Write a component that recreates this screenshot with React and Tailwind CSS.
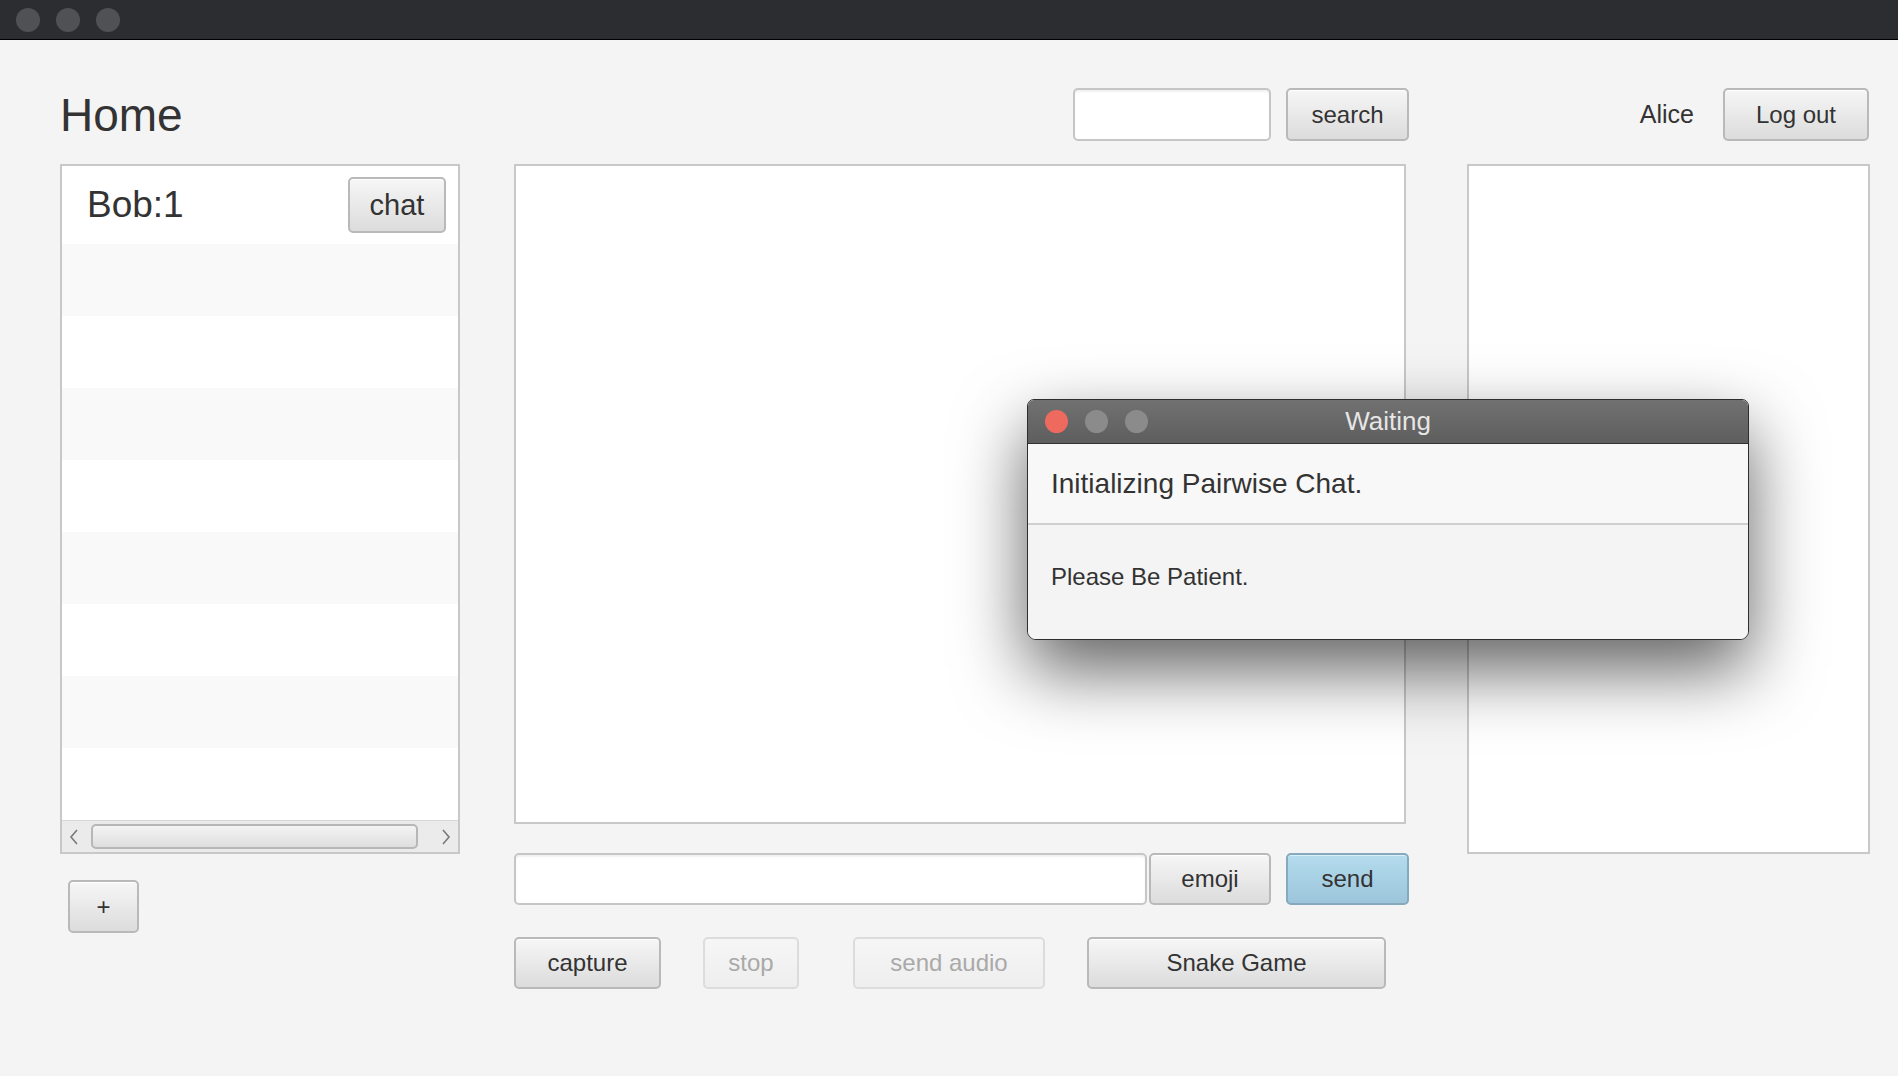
import React, { useState } from 'react';

const font = { fontFamily: '"Liberation Sans", Arial, sans-serif' };

// JavaFX-ish (Modena) control styles
const btn =
  'flex items-center justify-center rounded-[5px] border-2 border-[#b9b9b9] bg-linear-to-b from-[#f6f6f6] to-[#dcdcdc] shadow-[inset_0_1px_0_#ffffff] text-[#333] text-[24px] leading-none';
const btnDisabled =
  'flex items-center justify-center rounded-[5px] border-2 border-[#dcdcdc] bg-linear-to-b from-[#f6f6f6] to-[#eeeeee] text-[#a9a9a9] text-[24px] leading-none';
const btnBlue =
  'flex items-center justify-center rounded-[5px] border-2 border-[#86a9bd] bg-linear-to-b from-[#b4dced] to-[#9cc5dc] shadow-[inset_0_1px_0_#d8f0fa] text-[#333] text-[24px] leading-none';
const field =
  'rounded-[5px] border-2 border-[#c6c6c6] bg-white shadow-[inset_0_2px_2px_rgba(0,0,0,0.06)] outline-none px-2 text-[22px]';

function TrafficLights({ colors, size, gap }) {
  return (
    <div className={`flex items-center ${gap}`}>
      {colors.map((c, i) => (
        <span key={i} className={`${size} rounded-full ${c}`} />
      ))}
    </div>
  );
}

function FriendList() {
  const rows = Array.from({ length: 8 });
  return (
    <div className="mt-[23px] flex h-[690px] w-[400px] flex-col border-2 border-[#c8c8c8] bg-white">
      <div className="flex h-[78px] shrink-0 items-center justify-between bg-white pl-[25px] pr-[12px]">
        <span className="text-[37px] text-[#333]">Bob:1</span>
        <button className={`${btn} h-[56px] w-[98px] text-[29px]`}>chat</button>
      </div>
      {rows.map((_, i) => (
        <div key={i} className={`h-[72px] shrink-0 ${i % 2 === 0 ? 'bg-[#f9f9f9]' : 'bg-white'}`} />
      ))}
      {/* horizontal scrollbar */}
      <div className="flex h-[32px] shrink-0 items-center border-t border-[#d6d6d6] bg-[#ebebeb] pl-[7px] pr-[7px]">
        <svg width="10" height="16" viewBox="0 0 10 16" className="shrink-0">
          <path d="M8 1 L2 8 L8 15" fill="none" stroke="#7a7a7a" strokeWidth="1.6" />
        </svg>
        <div className="ml-[12px] mr-[23px] h-[25px] flex-1 rounded-[5px] border-2 border-[#b7b7b7] bg-linear-to-b from-[#f4f4f4] to-[#dedede]" />
        <svg width="10" height="16" viewBox="0 0 10 16" className="shrink-0">
          <path d="M2 1 L8 8 L2 15" fill="none" stroke="#7a7a7a" strokeWidth="1.6" />
        </svg>
      </div>
    </div>
  );
}

function WaitingDialog() {
  return (
    <div className="absolute left-[1027px] top-[399px] flex h-[241px] w-[722px] flex-col overflow-hidden rounded-t-[7px] rounded-b-[9px] border border-[#2e2e2e] bg-[#f4f4f4] shadow-[0_30px_70px_rgba(0,0,0,0.62)]">
      <div className="relative flex h-[44px] shrink-0 items-center border-b border-[#333] bg-linear-to-b from-[#717171] to-[#5e5e5e] px-[17px]">
        <TrafficLights colors={['bg-[#ee695e]', 'bg-[#8b8b8b]', 'bg-[#8b8b8b]']} size="h-[23px] w-[23px]" gap="gap-[17px]" />
        <span className="absolute inset-x-0 text-center text-[26px] text-[#e6e6e6]">Waiting</span>
      </div>
      <div className="flex h-[81px] shrink-0 items-center border-b-2 border-[#cfcfcf] bg-[#f8f8f8] px-[23px]">
        <span className="text-[28px] text-[#333]">Initializing Pairwise Chat.</span>
      </div>
      <div className="flex flex-1 items-center px-[23px] pb-[10px] bg-[#f4f4f4]">
        <span className="text-[24px] text-[#333]">Please Be Patient.</span>
      </div>
    </div>
  );
}

export default function App() {
  const [search, setSearch] = useState('');
  const [message, setMessage] = useState('');

  return (
    <div className="relative h-[1076px] w-[1898px] overflow-hidden bg-[#f4f4f4]" style={font}>
      {/* window title bar */}
      <div className="flex h-[40px] items-center border-b border-black bg-[#2c2d30] pl-[16px]">
        <TrafficLights colors={['bg-[#505154]', 'bg-[#505154]', 'bg-[#505154]']} size="h-[24px] w-[24px]" gap="gap-[16px]" />
      </div>

      <div className="flex pl-[60px] pt-[48px]">
        {/* left column */}
        <div className="flex w-[401px] flex-col">
          <div className="flex h-[53px] items-center">
            <h1 className="text-[46px] leading-none text-[#333]">Home</h1>
          </div>
          <FriendList />
          <button className={`${btn} ml-[8px] mt-[26px] h-[53px] w-[71px]`}>+</button>
        </div>

        {/* center column */}
        <div className="ml-[53px] flex w-[895px] flex-col">
          <div className="flex h-[53px] items-center justify-end">
            <input value={search} onChange={e => setSearch(e.target.value)} className={`${field} h-[53px] w-[198px]`} />
            <button className={`${btn} ml-[15px] h-[53px] w-[123px]`}>search</button>
          </div>
          <div className="mt-[23px] h-[660px] w-[892px] border-2 border-[#c8c8c8] bg-white" />
          <div className="mt-[29px] flex h-[52px] items-center">
            <input value={message} onChange={e => setMessage(e.target.value)} className={`${field} h-[52px] w-[633px]`} />
            <button className={`${btn} ml-[2px] h-[52px] w-[122px]`}>emoji</button>
            <button className={`${btnBlue} ml-[15px] h-[52px] w-[123px]`}>send</button>
          </div>
          <div className="mt-[32px] flex h-[52px] items-center">
            <button className={`${btn} h-[52px] w-[147px]`}>capture</button>
            <button disabled className={`${btnDisabled} ml-[42px] h-[52px] w-[96px]`}>stop</button>
            <button disabled className={`${btnDisabled} ml-[54px] h-[52px] w-[192px]`}>send audio</button>
            <button className={`${btn} ml-[42px] h-[52px] w-[299px]`}>Snake Game</button>
          </div>
        </div>

        {/* right column */}
        <div className="ml-[58px] flex w-[403px] flex-col">
          <div className="flex h-[53px] items-center justify-end pr-[1px]">
            <span className="text-[25px] text-[#333]">Alice</span>
            <button className={`${btn} ml-[29px] h-[53px] w-[146px]`}>Log out</button>
          </div>
          <div className="mt-[23px] h-[690px] w-[403px] border-2 border-[#c8c8c8] bg-white" />
        </div>
      </div>

      <WaitingDialog />
    </div>
  );
}
